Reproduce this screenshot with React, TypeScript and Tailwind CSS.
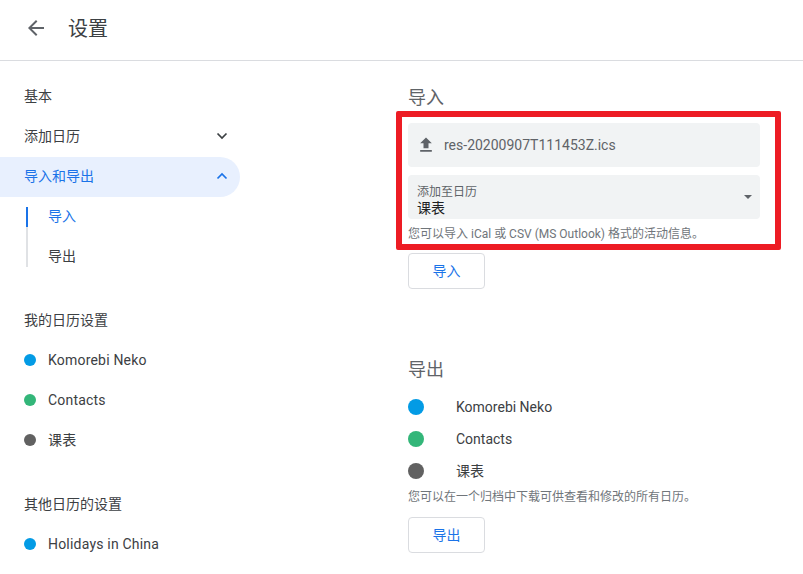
import React from "react";

function SideCal({ name, color }: { name: string; color: string }) {
  return (
    <div className="h-10 flex items-center pl-6 text-[#3c4043]">
      <span className={`w-3 h-3 rounded-full shrink-0 ${color}`} />
      <span className="ml-3 tracking-[0.2px]">{name}</span>
    </div>
  );
}

function ExportCal({ name, color }: { name: string; color: string }) {
  return (
    <div className="h-8 flex items-center text-sm text-[#3c4043]">
      <span className={`w-4 h-4 rounded-full shrink-0 ${color}`} />
      <span className="ml-8">{name}</span>
    </div>
  );
}

export default function App() {
  return (
    <div className="w-[803px] h-[574px] overflow-hidden bg-white font-['Roboto','Noto_Sans_CJK_SC',sans-serif]">
      <header className="h-[61px] border-b border-[#dadce0] flex items-center pl-6">
        <svg width="24" height="24" viewBox="0 0 24 24" className="fill-[#5f6368] -mt-1">
          <path d="M20 11H7.830l5.590-5.590L12 4l-8 8 8 8 1.410-1.410L7.830 13H20v-2z" />
        </svg>
        <h1 className="ml-5 -mt-[3px] text-xl text-[#3c4043] font-normal">设置</h1>
      </header>
      <div className="flex">
        <nav className="w-[240px] shrink-0 pt-[16px] text-sm">
          <div className="h-10 flex items-center pb-0.5 pl-6 text-[#3c4043]">基本</div>
          <div className="h-10 flex items-center justify-between pb-0.5 pl-6 pr-3 text-[#3c4043]">
            <span>添加日历</span>
            <svg width="12" height="12" viewBox="0 0 12 12" fill="none" className="stroke-[#3c4043]" strokeWidth="1.7">
              <path d="M1.500 3.500 6 8l4.500-4.500" />
            </svg>
          </div>
          <div className="h-10 flex items-center justify-between pb-0.5 pl-6 pr-3 bg-[#e8f0fe] rounded-r-[20px] text-[#1a73e8]">
            <span>导入和导出</span>
            <svg width="12" height="12" viewBox="0 0 12 12" fill="none" className="stroke-[#1a73e8]" strokeWidth="1.7">
              <path d="M1.500 8.500 6 4l4.500 4.500" />
            </svg>
          </div>
          <div className="ml-[26px] mt-[10px] border-l-2 border-[#e0e2e5]">
            <div className="h-5 -ml-0.5 border-l-2 border-[#1a73e8] flex items-center pb-0.5 pl-5 text-[#1a73e8]">导入</div>
            <div className="h-10 pl-5 pt-[19px] leading-5 text-[#3c4043]">导出</div>
          </div>
          <div className="h-10 flex items-center pl-6 mt-[33px] text-[#3c4043]">我的日历设置</div>
          <SideCal name="Komorebi Neko" color="bg-[#039be5]" />
          <SideCal name="Contacts" color="bg-[#33b679]" />
          <SideCal name="课表" color="bg-[#616161]" />
          <div className="h-10 flex items-center pl-6 mt-6 text-[#3c4043]">其他日历的设置</div>
          <SideCal name="Holidays in China" color="bg-[#039be5]" />
        </nav>
        <main className="ml-[156px] w-[385px] pt-[15px]">
          <h2 className="h-[35px] pl-3 text-lg leading-[44px] font-normal text-[#5f6368]">导入</h2>
          <div className="border-[6px] border-[#ed1c24] rounded-[2px] h-[139px] px-1.5 pt-1.5">
            <div className="h-11 w-[352px] bg-[#f1f3f4] rounded flex items-center pl-2 text-sm text-[#5f6368]">
              <svg width="20" height="20" viewBox="0 0 24 24" className="fill-[#5f6368]">
                <path d="M9 16h6v-6h4l-7-7-7 7h4zm-4 2h14v2H5z" />
              </svg>
              <span className="ml-2">res-20200907T111453Z.ics</span>
            </div>
            <div className="mt-2 h-11 w-[352px] bg-[#f1f3f4] rounded flex items-center justify-between pl-[9px] pr-[8px]">
              <div className="flex flex-col pt-[7px]">
                <span className="text-xs leading-[16px] text-[#5f6368]">添加至日历</span>
                <span className="text-sm leading-[17px] text-[#202124]">课表</span>
              </div>
              <span className="w-0 h-0 border-x-[4px] border-x-transparent border-t-[4px] border-t-[#5f6368]" />
            </div>
            <p className="mt-[7px] text-xs leading-4 text-[#70757a]">您可以导入 iCal 或 CSV (MS Outlook) 格式的活动信息。</p>
          </div>
          <button className="ml-3 mt-[3px] w-[77px] h-9 border border-[#dadce0] rounded text-sm text-[#1a73e8] bg-white">导入</button>
          <h2 className="mt-[64px] h-8 pl-3 text-lg leading-[34px] font-normal text-[#5f6368]">导出</h2>
          <div className="pl-3 mt-[6px]">
            <ExportCal name="Komorebi Neko" color="bg-[#039be5]" />
            <ExportCal name="Contacts" color="bg-[#33b679]" />
            <ExportCal name="课表" color="bg-[#616161]" />
            <p className="mt-[2px] text-xs leading-4 text-[#70757a]">您可以在一个归档中下载可供查看和修改的所有日历。</p>
            <button className="mt-[12px] w-[77px] h-9 border border-[#dadce0] rounded text-sm text-[#1a73e8] bg-white">导出</button>
          </div>
        </main>
      </div>
    </div>
  );
}
